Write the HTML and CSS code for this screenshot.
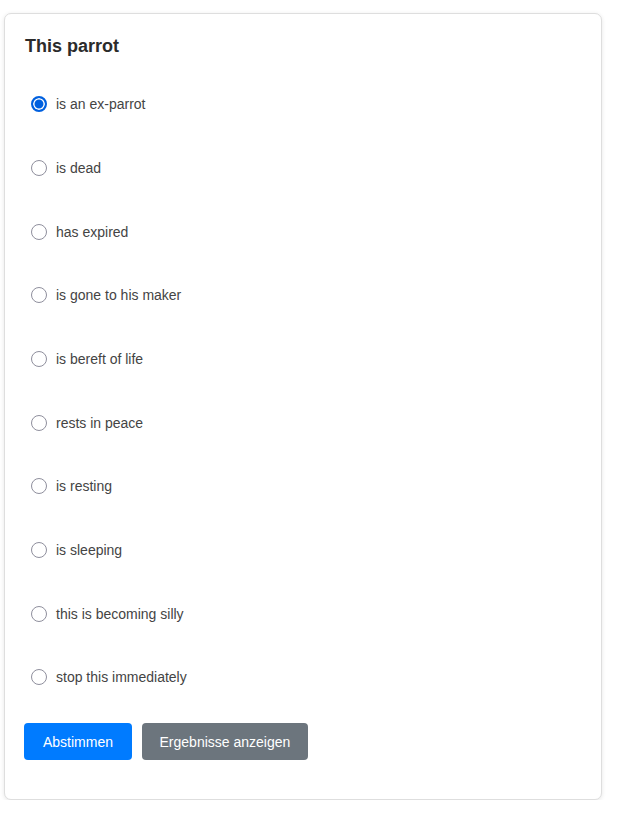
FILE: index.html
```
<!DOCTYPE html>
<html>
<head>
<meta charset="utf-8">
<link rel="stylesheet" href="styles.css">
</head>
<body>
<div class="page">
  <form class="card">
    <h2 class="title">This parrot</h2>
    <div class="options">
      <label class="option"><input type="radio" name="p" checked><span>is an ex-parrot</span></label>
      <label class="option"><input type="radio" name="p"><span>is dead</span></label>
      <label class="option"><input type="radio" name="p"><span>has expired</span></label>
      <label class="option"><input type="radio" name="p"><span>is gone to his maker</span></label>
      <label class="option"><input type="radio" name="p"><span>is bereft of life</span></label>
      <label class="option"><input type="radio" name="p"><span>rests in peace</span></label>
      <label class="option"><input type="radio" name="p"><span>is resting</span></label>
      <label class="option"><input type="radio" name="p"><span>is sleeping</span></label>
      <label class="option"><input type="radio" name="p"><span>this is becoming silly</span></label>
      <label class="option"><input type="radio" name="p"><span>stop this immediately</span></label>
    </div>
    <div class="actions">
      <button type="button" class="btn btn-primary">Abstimmen</button>
      <button type="button" class="btn btn-secondary">Ergebnisse anzeigen</button>
    </div>
  </form>
</div>
</body>
</html>
```
FILE: styles.css
```
html, body {
  margin: 0;
  padding: 0;
  background: #fff;
}
body {
  font-family: "Liberation Sans", Arial, sans-serif;
}
.page {
  padding: 13px 17px 0 4px;
}
.card {
  box-sizing: border-box;
  width: 598px;
  height: 787px;
  border: 1px solid #dedede;
  border-radius: 7px;
  box-shadow: 0 1px 4px rgba(0, 0, 0, 0.1);
  padding: 20px 20px 39px 20px;
  background: #fff;
}
.title {
  margin: 0;
  font-size: 18px;
  line-height: 24px;
  font-weight: bold;
  color: #2b2b2b;
}
.options {
  margin-top: 14.65px;
  display: grid;
  grid-auto-rows: 63.67px;
}
.option {
  display: flex;
  align-items: center;
  font-size: 14px;
  color: #444;
  padding-left: 6px;
}
.option input {
  appearance: none;
  -webkit-appearance: none;
  box-sizing: border-box;
  width: 16px;
  height: 16px;
  margin: 0 9px 0 0;
  border: 1px solid #8f8f9d;
  border-radius: 50%;
  background: #fff;
  flex: none;
}
.option input:checked {
  border: 2px solid #0060df;
  background: #0060df;
  box-shadow: inset 0 0 0 1.5px #fff;
}
.actions {
  margin-top: 14.2px;
  margin-left: -1px;
  display: flex;
  gap: 10px;
}
.btn {
  height: 37px;
  padding: 0 19px;
  border: none;
  border-radius: 4px;
  font-family: "Liberation Sans", Arial, sans-serif;
  font-size: 14px;
  color: #fff;
}
.btn-primary {
  background: #007bff;
}
.btn-secondary {
  background: #6c757d;
  padding: 0 17.5px;
}
```
